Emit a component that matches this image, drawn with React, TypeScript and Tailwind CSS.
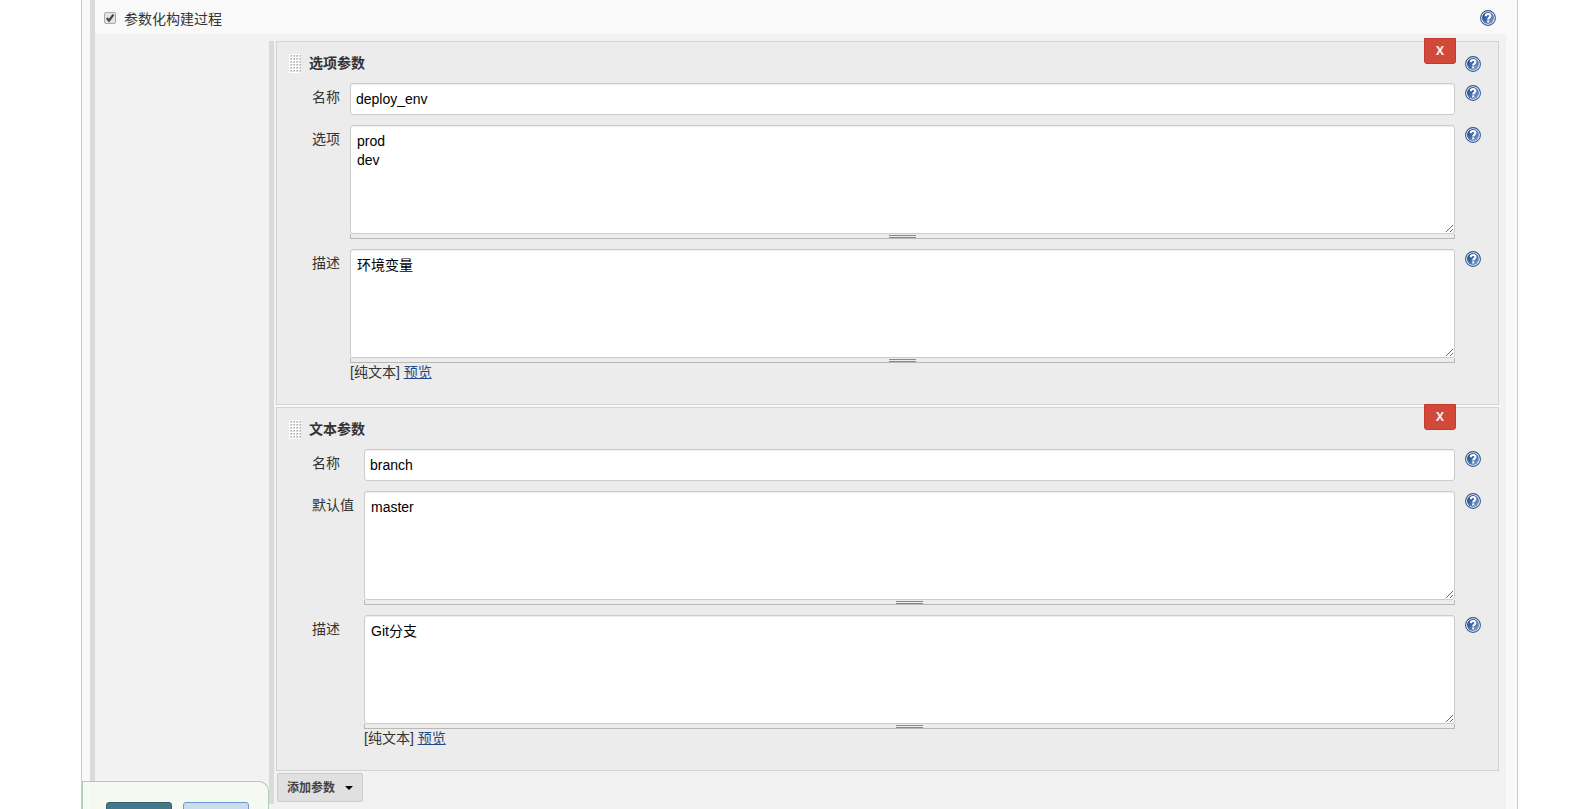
import React, { useState } from "react";

type Field = {
  id: string;
  label: string;
  value: string;
  kind: "input" | "textarea";
  preview?: boolean;
};

type Param = {
  title: string;
  help: boolean;
  labelWidth: string;
  fields: Field[];
};

const params: Param[] = [
  {
    title: "选项参数",
    help: true,
    labelWidth: "w-[38px]",
    fields: [
      { id: "choice-name", label: "名称", value: "deploy_env", kind: "input" },
      { id: "choice-options", label: "选项", value: "prod\ndev", kind: "textarea" },
      { id: "choice-desc", label: "描述", value: "环境变量", kind: "textarea", preview: true },
    ],
  },
  {
    title: "文本参数",
    help: false,
    labelWidth: "w-[52px]",
    fields: [
      { id: "text-name", label: "名称", value: "branch", kind: "input" },
      { id: "text-default", label: "默认值", value: "master", kind: "textarea" },
      { id: "text-desc", label: "描述", value: "Git分支", kind: "textarea", preview: true },
    ],
  },
];

const HelpIcon: React.FC = () => (
  <button type="button" aria-label="帮助" className="block size-4 shrink-0 cursor-pointer">
    <svg viewBox="0 0 16 16" className="block size-4">
      <defs>
        <linearGradient id="help" x1="0" y1="0" x2="1" y2="1">
          <stop offset="0.2" stopColor="#24508f" />
          <stop offset="1" stopColor="#86a9d6" />
        </linearGradient>
      </defs>
      <circle cx="8" cy="8" r="7.4" fill="#fff" stroke="#32578f" strokeWidth="1.1" />
      <circle cx="8" cy="8" r="6" fill="url(#help)" />
      <path
        d="M5.7 6.2C5.7 4.7 6.7 4 8.1 4s2.3.7 2.3 2c0 1.6-2.2 1.7-2.2 3.5"
        fill="none"
        stroke="#fff"
        strokeWidth="2"
      />
      <rect x="7.2" y="10.4" width="2" height="2" fill="#fff" />
    </svg>
  </button>
);

const DragHandle: React.FC = () => (
  <svg viewBox="0 0 12 19" className="block h-[19px] w-3 shrink-0 cursor-move">
    <defs>
      <pattern id="grip" width="3" height="3" patternUnits="userSpaceOnUse">
        <rect width="3" height="3" fill="#fff" />
        <rect x="1" y="1" width="2" height="2" fill="#d6d6d2" />
        <rect x="2" y="1" width="1" height="1" fill="#aaa" />
      </pattern>
    </defs>
    <rect width="12" height="19" fill="url(#grip)" />
  </svg>
);

const ParamField: React.FC<{ field: Field; labelWidth: string }> = ({ field, labelWidth }) => {
  const [value, setValue] = useState(field.value);

  return (
    <div className="flex items-start">
      <label htmlFor={field.id} className={`${labelWidth} shrink-0 pt-1 leading-5`}>
        {field.label}
      </label>
      <div className="min-w-0 flex-1">
        {field.kind === "input" ? (
          <input
            id={field.id}
            type="text"
            value={value}
            onChange={(e) => setValue(e.target.value)}
            className="block h-8 w-full rounded-[3px] border border-[#ccc] bg-white px-[5px] text-black shadow-[inset_0_1px_1px_rgba(0,0,0,0.075)] outline-none"
          />
        ) : (
          <>
            <textarea
              id={field.id}
              value={value}
              onChange={(e) => setValue(e.target.value)}
              className="block h-[109px] w-full resize rounded-[3px] border border-[#ccc] bg-white px-1.5 py-1.5 leading-[19px] text-black shadow-[inset_0_1px_1px_rgba(0,0,0,0.075)] outline-none"
            />
            {/* Resize bar */}
            <div className="flex h-[5px] cursor-s-resize justify-center border-x border-b border-[#b8b8b4] pt-px">
              <div className="h-[3px] w-[27px] border-y border-[#888a85]" />
            </div>
          </>
        )}
        {field.preview && (
          <div className="leading-[18px]">
            [纯文本]{" "}
            <a href="#preview" className="text-[#204a87] underline">
              预览
            </a>
          </div>
        )}
      </div>
      <div className="ml-[10px] mt-[2px]">
        <HelpIcon />
      </div>
    </div>
  );
};

const ParamCard: React.FC<{ param: Param }> = ({ param }) => (
  <section className="relative border border-[#d3d3d3] bg-[#ececec] pb-[23px] pl-3 pr-[17px] pt-3">
    <button
      type="button"
      aria-label="删除"
      className="absolute right-[42px] -top-1 h-[26px] w-8 cursor-pointer rounded-b-[3px] border border-[#c23b2c] bg-[#d24939] font-['Open_Sans',sans-serif] text-xs font-bold text-[#f2f2f2]"
    >
      X
    </button>
    <div className="flex items-start">
      <DragHandle />
      <h2 className="ml-2 flex-1 font-bold leading-[19px]">{param.title}</h2>
      {param.help && (
        <div className="-mb-px pt-[2px]">
          <HelpIcon />
        </div>
      )}
    </div>
    <div className="mt-[10px] flex flex-col gap-[10px] pl-[23px]">
      {param.fields.map((field) => (
        <ParamField key={field.id} field={field} labelWidth={param.labelWidth} />
      ))}
    </div>
  </section>
);

const App: React.FC = () => {
  const [enabled, setEnabled] = useState(true);

  return (
    <div className="flex min-h-screen flex-col bg-white pl-[81px] pr-[75px] font-['Liberation_Sans','Noto_Sans_CJK_SC',sans-serif] text-sm text-[#333]">
      <main className="relative flex flex-1 flex-col border-x border-[#ccc] bg-[#f9f9f9] pl-2 pr-[11px]">
        {/* Section header */}
        <div className="flex h-[34px] items-center border-l-[5px] border-[#dadada] pl-[9px] pr-[10px] pt-[2px]">
          <div className="relative flex size-3">
            <input
              id="parameterized"
              type="checkbox"
              checked={enabled}
              onChange={(e) => setEnabled(e.target.checked)}
              className="size-3 appearance-none rounded-[2px] border border-[#aaa] bg-[#e4e4e4]"
            />
            {enabled && (
              <svg viewBox="0 0 12 12" className="pointer-events-none absolute inset-0 size-3">
                <path d="M2.8 6l2.2 2.6L9.4 2.6" fill="none" stroke="#444" strokeWidth="2.2" />
              </svg>
            )}
          </div>
          <label htmlFor="parameterized" className="ml-2 flex-1 pt-px">
            参数化构建过程
          </label>
          <HelpIcon />
        </div>

        {/* Parameters */}
        <div className="flex flex-1 border-l-[5px] border-[#dadada] bg-[#f2f2f2] pb-[5px] pr-[7px] pt-[7px]">
          <div className="w-[174px] shrink-0" />
          <div className="min-w-0 flex-1 border-l-[5px] border-[#dadada] pl-[2px]">
            <div className="flex flex-col gap-[2px] bg-[#f9f9f9]">
              {params.map((param) => (
                <ParamCard key={param.title} param={param} />
              ))}
            </div>
            <button
              type="button"
              className="ml-px mt-[2px] flex h-[29px] cursor-pointer items-center rounded-[2px] border border-[#ccc] bg-[#e0e0e0] px-[9px] text-xs font-bold text-[#444]"
            >
              添加参数
              <svg viewBox="0 0 8 4" className="ml-[10px] h-1 w-2">
                <path d="M0 0h8L4 4z" fill="#000" />
              </svg>
            </button>
          </div>
        </div>

        {/* Save bar */}
        <div className="absolute bottom-0 left-0 flex h-7 w-[187px] gap-[11px] overflow-hidden rounded-tr-[10px] border-r border-t border-l border-[#aacfb8] bg-[#f5f9ef]/90 pl-[23px] pt-5">
          <button
            type="button"
            aria-label="保存"
            className="h-7 w-[66px] shrink-0 rounded-[3px] border border-[#355f6e] bg-[#467889]"
          />
          <button
            type="button"
            aria-label="应用"
            className="h-7 w-[66px] shrink-0 rounded-[3px] border border-[#6a9bd0] bg-[#cadcee]"
          />
        </div>
      </main>
    </div>
  );
};

export default App;
